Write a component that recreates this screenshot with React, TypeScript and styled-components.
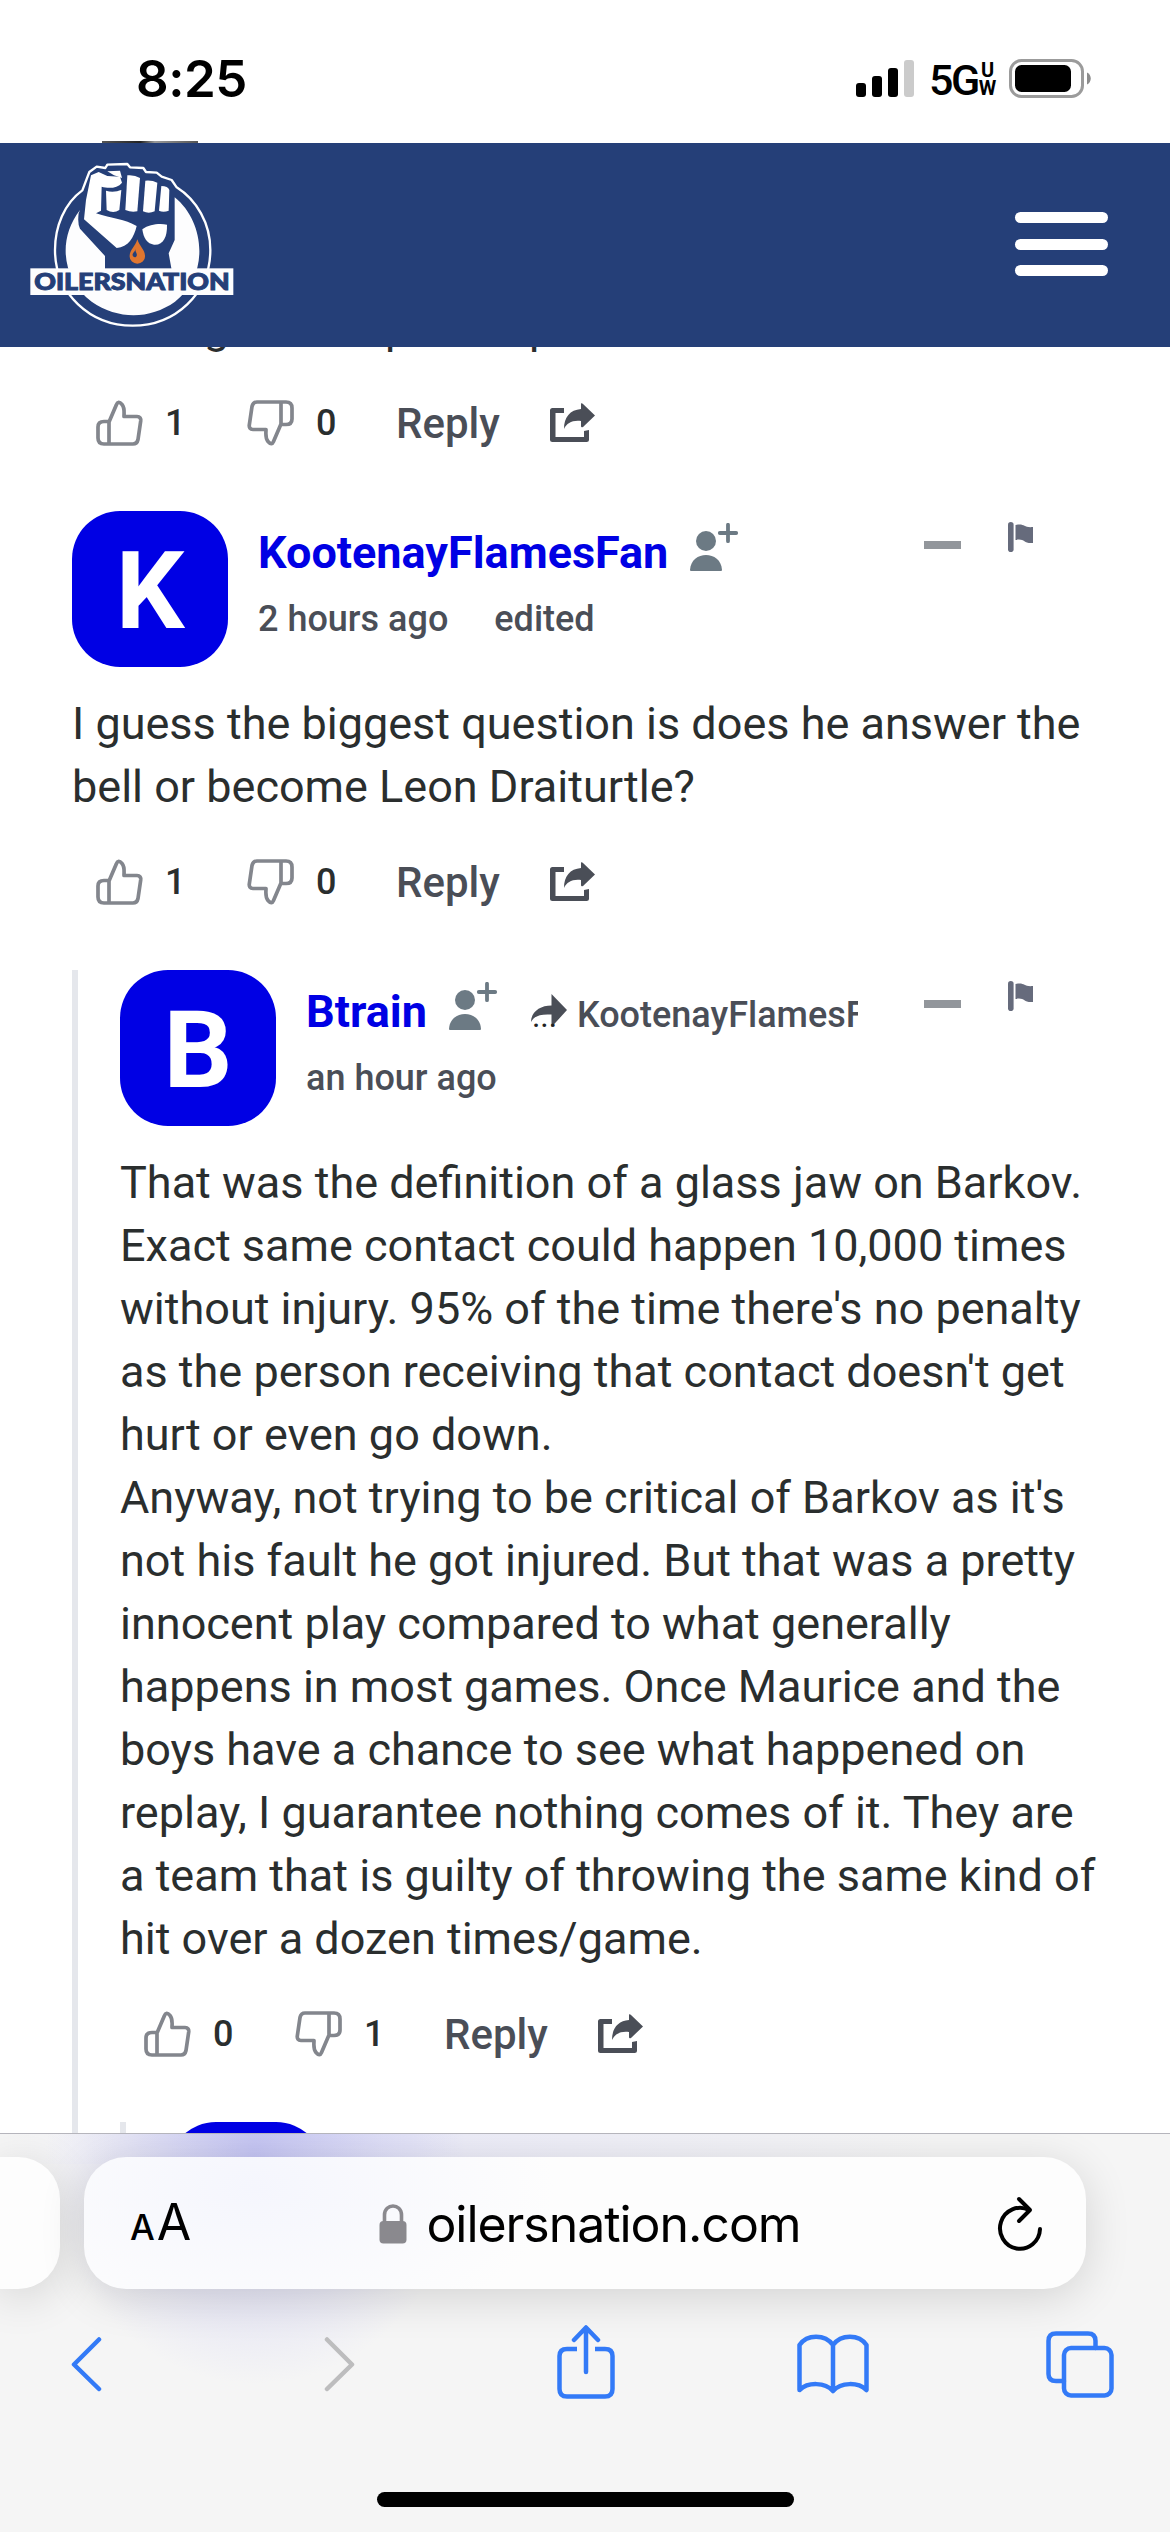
import styled, { createGlobalStyle } from "styled-components";

const App = () => (
  <Screen>
    <GlobalStyle />
    <StatusBar>
      <Clock>8:25</Clock>
      <StatusIcons>
        <SignalIcon />
        <Network>
          5G
          <NetworkSuffix>
            <span>U</span>
            <span>W</span>
          </NetworkSuffix>
        </Network>
        <BatteryIcon />
      </StatusIcons>
    </StatusBar>

    <SiteHeader>
      <Logo />
      <MenuButton aria-label="Menu">
        <span />
        <span />
        <span />
      </MenuButton>
    </SiteHeader>

    <Thread>
      <ClippedLine>
        <span>g</span>
        <span>p</span>
        <span>p</span>
      </ClippedLine>
      <Actions likes={1} dislikes={0} />
      <Comment
        author="KootenayFlamesFan"
        time="2 hours ago"
        edited
        lines={[
          "I guess the biggest question is does he answer the",
          "bell or become Leon Draiturtle?",
        ]}
        likes={1}
        dislikes={0}
      />
      <Replies>
        <Comment
          author="Btrain"
          time="an hour ago"
          replyTo="KootenayFlamesFan"
          lines={[
            "That was the definition of a glass jaw on Barkov.",
            "Exact same contact could happen 10,000 times",
            "without injury. 95% of the time there's no penalty",
            "as the person receiving that contact doesn't get",
            "hurt or even go down.",
            "Anyway, not trying to be critical of Barkov as it's",
            "not his fault he got injured. But that was a pretty",
            "innocent play compared to what generally",
            "happens in most games. Once Maurice and the",
            "boys have a chance to see what happened on",
            "replay, I guarantee nothing comes of it. They are",
            "a team that is guilty of throwing the same kind of",
            "hit over a dozen times/game.",
          ]}
          likes={0}
          dislikes={1}
        />
        <Replies>
          <Avatar />
        </Replies>
      </Replies>
    </Thread>

    <BrowserBar>
      <TabStrip>
        <PreviousTab />
        <AddressBar>
          <TextSize>
            <small>A</small>A
          </TextSize>
          <Address>
            <LockIcon />
            oilersnation.com
          </Address>
          <ReloadIcon />
        </AddressBar>
      </TabStrip>
      <Toolbar>
        <BackIcon />
        <ForwardIcon />
        <ShareSheetIcon />
        <BookIcon />
        <TabsIcon />
      </Toolbar>
      <HomeIndicator />
    </BrowserBar>
  </Screen>
);

export default App;

const Comment = ({
  author,
  time,
  edited,
  replyTo,
  lines,
  likes,
  dislikes,
}: CommentProps) => (
  <article>
    <CommentHeader>
      <Avatar>{author[0]}</Avatar>
      <Meta>
        <AuthorRow>
          <Author>{author}</Author>
          <FollowIcon />
          {replyTo && (
            <ReplyTo>
              <ReplyArrow>
                <ReplyArrowIcon />
                <Dots>...</Dots>
              </ReplyArrow>
              {replyTo}
            </ReplyTo>
          )}
        </AuthorRow>
        <TimeRow>
          <span>{time}</span>
          {edited && <span>edited</span>}
        </TimeRow>
      </Meta>
      <Controls>
        <CollapseButton aria-label="Collapse" />
        <FlagIcon />
      </Controls>
    </CommentHeader>
    <CommentText>
      {lines.map((line) => (
        <span key={line}>{line}</span>
      ))}
    </CommentText>
    <Actions likes={likes} dislikes={dislikes} />
  </article>
);

const Actions = ({ likes, dislikes }: ActionsProps) => (
  <ActionRow>
    <ThumbIcon />
    <Count>{likes}</Count>
    <ThumbIcon $down />
    <Count>{dislikes}</Count>
    <ReplyButton>Reply</ReplyButton>
    <ShareIcon />
  </ActionRow>
);

type ActionsProps = {
  likes: number;
  dislikes: number;
};

type CommentProps = ActionsProps & {
  author: string;
  time: string;
  edited?: boolean;
  replyTo?: string;
  lines: string[];
};

// icons
const SignalIcon = () => (
  <svg width="58" height="37" viewBox="0 0 58 37">
    <rect x="0" y="23" width="10" height="14" rx="3" />
    <rect x="16" y="16" width="10" height="21" rx="3" />
    <rect x="32" y="8" width="10" height="29" rx="3" />
    <rect x="48" y="0" width="10" height="37" rx="3" fill="#cbcbcb" />
  </svg>
);

const BatteryIcon = () => (
  <svg width="82" height="39" viewBox="0 0 82 39">
    <rect
      x="1.5"
      y="1.5"
      width="72"
      height="36"
      rx="11"
      fill="none"
      stroke="#9b9b9b"
      strokeWidth="3"
    />
    <rect x="6" y="6" width="56" height="27" rx="6.5" />
    <path d="M78 13.5c5 2 5 10 0 12z" fill="#8c8c8c" />
  </svg>
);

const Logo = () => (
  <svg width="230" height="190" viewBox="0 0 690 570">
    <path
      d="M187 121C133 160 105 230 105 300C105 430 210 527 338 527C466 527 571 430 571 300C571 220 530 150 470 112L455 90L425 80L410 68L378 66L370 54L330 52L322 42L262 44L256 54L230 50L208 66Z"
      fill="#253f78"
      stroke="#fff"
      strokeWidth="7"
      strokeLinejoin="round"
    />
    <path
      d="M180 180C110 270 128 390 215 455C295 510 390 508 465 455C570 375 555 215 464 142V270L446 310L455 360H255V318L180 236Q172 220 176 190Z"
      fill="#fdfdfe"
    />
    <path
      d="M213 76L236 66L262 78L300 80L306 98C292 116 264 116 245 110L243 182L228 190C275 205 315 208 350 228C342 262 325 292 290 294L192 208L198 150Z"
      fill="#fff"
    />
    <path d="M262 64L300 62L306 84L282 76Z" fill="#fff" />
    <path
      d="M258 122C276 128 292 124 304 120L298 180Q280 192 260 180Z"
      fill="#fff"
    />
    <path d="M322 76Q344 74 360 84L352 184Q334 188 316 180Z" fill="#fff" />
    <path d="M376 92Q396 90 412 98L404 184Q386 192 369 184Z" fill="#fff" />
    <path d="M424 108Q444 108 448 120L446 182Q430 188 417 182Z" fill="#fff" />
    <path
      d="M367 238C388 222 420 220 441 224C442 260 430 286 402 284C382 282 370 264 367 238Z"
      fill="#fff"
    />
    <path
      d="M352 268C360 292 376 300 375 320A23 21 0 0 1 329 320C328 300 346 290 352 268Z"
      fill="#e0762f"
    />
    <path
      d="M346 296C345 306 353 310 350 318C346 326 336 320 338 312C340 306 346 304 346 296Z"
      fill="#253f78"
    />
    <rect x="31" y="355" width="609" height="80" fill="#fdfdfe" />
    <text
      x="336"
      y="419"
      textAnchor="middle"
      textLength="586"
      lengthAdjust="spacingAndGlyphs"
      fontFamily="Lato, sans-serif"
      fontWeight="900"
      fontSize="67"
      fill="#253f78"
      stroke="#253f78"
      strokeWidth="3"
    >
      OILERSNATION
    </text>
  </svg>
);

const FollowIcon = () => (
  <svg width="49" height="49" viewBox="0 0 49 49" fill="#6c7a84">
    <circle cx="16" cy="18" r="10" />
    <path d="M0 47C1 27 31 27 32 47Q32 48 31 48H1Q0 48 0 47Z" />
    <path
      d="M38 1.8V18.2M29.8 10H46.2"
      stroke="#6c7a84"
      strokeWidth="3.8"
      strokeLinecap="round"
    />
  </svg>
);

const ReplyArrowIcon = () => (
  <svg width="36" height="34" viewBox="0 0 36 34" fill="#4a4e57">
    <path d="M20.5 0L36 16L20.5 33V20.5C10 20 4 21 0 28C0 18 9 11.5 20.5 11.5Z" />
  </svg>
);

const FlagIcon = () => (
  <svg width="26" height="30" viewBox="0 0 26 30" fill="#666b7c">
    <rect x="0" y="0" width="5.6" height="30" rx="2.8" />
    <path d="M7.5 3C17 1 15 6 25 5V21C15 22 17 16 7.5 18Z" />
  </svg>
);

const ThumbIcon = ({ $down = false }: { $down?: boolean }) => (
  <Thumb
    $down={$down}
    width="47"
    height="46"
    viewBox="0 0 47 46"
    fill="none"
    stroke="#83868d"
    strokeWidth="3.7"
    strokeLinejoin="round"
  >
    <path d="M13 22L20.5 4.5C21.5 2 23.5 1.5 26 4.5C29 8 28 12 28 16.5H41C44 16.5 45 18.5 44.7 21L42 39.5Q41 44 37 44H8Q2 44 2 38V27Q2 21.5 8 21.5H13V44" />
  </Thumb>
);

const ShareIcon = () => (
  <svg width="46" height="40" viewBox="0 0 46 40" fill="#4a4e57">
    <path d="M2.5 5H14V10H5.5V34H34V28L39 27V36.5Q39 39 36.5 39H2.5Q0 39 0 36.5V7.5Q0 5 2.5 5Z" />
    <path d="M31 0.5Q32 0 33 1L45 12.5L33 24Q31 25 31 23V18C22 17 17 20 14 26C14 14 20 7 31 6Z" />
  </svg>
);

const LockIcon = () => (
  <svg width="28" height="40" viewBox="0 0 28 40">
    <path
      d="M5.5 19V11C5.5-1 22.5-1 22.5 11V19"
      fill="none"
      stroke="#8a898e"
      strokeWidth="3.6"
    />
    <rect x="0.5" y="17" width="27" height="22.5" rx="4" fill="#8a898e" />
  </svg>
);

const ReloadIcon = () => (
  <svg
    width="46"
    height="56"
    viewBox="0 0 46 56"
    fill="none"
    stroke="#000"
    strokeWidth="4"
    strokeLinecap="round"
    strokeLinejoin="round"
  >
    <path d="M43 33A20 20.5 0 1 1 32 14" />
    <path d="M22 3L33 14L22 25" />
  </svg>
);

const BackIcon = () => (
  <ToolIcon width="35" height="56" viewBox="0 0 35 56">
    <path d="M31 3.5L6 28.5L31 53" />
  </ToolIcon>
);

const ForwardIcon = () => (
  <ToolIcon width="35" height="56" viewBox="0 0 35 56" $muted>
    <path d="M5 3.5L30 28.5L5 53" />
  </ToolIcon>
);

const ShareSheetIcon = () => (
  <ToolIcon width="58" height="78" viewBox="0 0 58 78">
    <path
      d="M20 24H10Q2.5 24 2.5 31V64Q2.5 71.5 10 71.5H48Q55.5 71.5 55.5 64V31Q55.5 24 48 24H38"
      strokeLinecap="butt"
    />
    <path d="M29 47V4M17 15L29 2.5L41 15" />
  </ToolIcon>
);

const BookIcon = () => (
  <ToolIcon width="72" height="60" viewBox="0 0 72 60">
    <path d="M36 11C28 0 10 0 2.5 11V56C11 48 28 48 36 57C44 48 61 48 69.5 56V11C62 0 44 0 36 11V57" />
  </ToolIcon>
);

const TabsIcon = () => (
  <ToolIcon width="68" height="67" viewBox="0 0 68 67">
    <rect x="18" y="17" width="47.5" height="47.5" rx="7" />
    <path d="M18 50H10Q2.5 50 2.5 43V10Q2.5 2.5 10 2.5H42Q49.5 2.5 49.5 10V17" />
  </ToolIcon>
);

const GlobalStyle = createGlobalStyle`
  * {
    box-sizing: border-box;
  }

  body {
    margin: 0;
    background: #fff;
  }

  svg {
    display: block;
    flex-shrink: 0;
  }
`;

const Screen = styled.div`
  display: flex;
  flex-direction: column;
  width: 1170px;
  height: 2532px;
  overflow: hidden;
  background: #fff;
  font-family: Roboto, sans-serif;
`;

const StatusBar = styled.div`
  display: flex;
  flex-shrink: 0;
  align-items: center;
  justify-content: space-between;
  height: 143px;
  padding: 13px 79px 0 136px;
  /* sliver of the avatar scrolled under the header */
  background: linear-gradient(90deg, #555, #222 40%, #999 55%, #555) 102px
    100% / 96px 2px no-repeat;
`;

const Clock = styled.span`
  font-family: Inter, sans-serif;
  font-size: 51px;
  font-weight: 600;
  letter-spacing: -0.5px;
`;

const StatusIcons = styled.div`
  display: flex;
  align-items: center;
  gap: 15px;
`;

const Network = styled.div`
  display: flex;
  align-items: center;
  width: 65px;
  height: 40px;
  padding-top: 3px;
  font-size: 43px;
  font-weight: 500;
  letter-spacing: -2.5px;
`;

const NetworkSuffix = styled.span`
  display: flex;
  flex-direction: column;
  align-items: center;
  margin: 0 0 2px 1px;
  font-size: 20px;
  font-weight: 700;
  line-height: 18px;
  letter-spacing: 0;
`;

const SiteHeader = styled.header`
  display: flex;
  flex-shrink: 0;
  align-items: center;
  justify-content: space-between;
  height: 204px;
  padding: 0 62px 0 20px;
  background: #253f78;
`;

const MenuButton = styled.button`
  display: flex;
  flex-direction: column;
  gap: 15.5px;
  width: 93px;
  margin-bottom: 2px;
  padding: 0;
  border: none;
  background: none;

  span {
    height: 11px;
    border-radius: 6px;
    background: #fff;
  }
`;

const Thread = styled.main`
  height: 1786px;
  padding: 0 72px;
  overflow: hidden;
`;

/* only the descenders show below the site header */
const ClippedLine = styled.div`
  display: flex;
  align-items: flex-end;
  height: 12px;
  padding-left: 132px;
  overflow: hidden;
  color: #2a2e2e;
  font-size: 45px;
  line-height: 63px;

  span {
    width: 181px;
  }

  span + span {
    width: 144px;
  }
`;

const Replies = styled.div`
  padding-left: 42px;
  border-left: 6px solid #e5e7ec;
`;

const CommentHeader = styled.header`
  display: flex;
  height: 156px;
`;

const Avatar = styled.div`
  display: flex;
  flex-shrink: 0;
  align-items: center;
  justify-content: center;
  width: 156px;
  height: 156px;
  padding-top: 3px;
  border-radius: 48px;
  background: #0000e4;
  color: #fff;
  font-size: 108px;
  font-weight: 700;
`;

const Meta = styled.div`
  display: flex;
  flex: 1;
  flex-direction: column;
  min-width: 0;
  padding: 12px 0 0 30px;
`;

const AuthorRow = styled.div`
  display: flex;
  height: 60px;
`;

const Author = styled.span`
  margin-right: 22px;
  color: #0000e4;
  font-size: 45px;
  font-weight: 700;
  line-height: 60px;
`;

const ReplyTo = styled.span`
  display: flex;
  width: 327px;
  margin-left: 33px;
  overflow: hidden;
  color: #4a4e57;
  font-size: 36px;
  font-weight: 500;
  line-height: 66px;
`;

const ReplyArrow = styled.span`
  position: relative;
  flex-shrink: 0;
  width: 46px;
  padding-top: 12px;
`;

const Dots = styled.span`
  position: absolute;
  top: 12px;
  left: 1px;
  color: #222;
  font-size: 32px;
  font-weight: 400;
  line-height: 44px;
`;

const TimeRow = styled.div`
  display: flex;
  gap: 46px;
  color: #4a4e57;
  font-size: 36px;
  font-weight: 500;
  line-height: 72px;
`;

const Controls = styled.div`
  display: flex;
  align-items: flex-start;
  gap: 47px;
  padding: 11px 64px 0 0;
`;

const CollapseButton = styled.button`
  width: 37px;
  height: 8px;
  margin-top: 19px;
  padding: 0;
  border: none;
  background: #92969b;
`;

const CommentText = styled.p`
  display: flex;
  flex-direction: column;
  margin: 25px 0 0;
  color: #2a2e2e;
  font-size: 45px;
  line-height: 63px;
  white-space: nowrap;
`;

const ActionRow = styled.div`
  display: flex;
  align-items: center;
  height: 128px;
  margin-bottom: 24px;
  padding-left: 24px;
`;

const Thumb = styled.svg<{ $down: boolean }>`
  transform: ${({ $down }) => ($down ? "rotate(180deg)" : "none")};
`;

const Count = styled.span`
  width: 82px;
  margin-left: 22px;
  color: #2a2e2e;
  font-size: 36px;
  font-weight: 500;
`;

const ReplyButton = styled.button`
  width: 154px;
  margin-left: -2px;
  padding: 0;
  border: none;
  background: none;
  color: #4a4e57;
  font: 500 42px Roboto, sans-serif;
  text-align: left;
`;

const BrowserBar = styled.footer`
  display: flex;
  flex: 1;
  flex-direction: column;
  border-top: 1px solid #b5b5bc;
  overflow: hidden;
  background: radial-gradient(
      ellipse 210px 230px at 255px 20px,
      rgba(120, 120, 235, 0.36),
      rgba(150, 150, 240, 0.16) 60%,
      transparent
    ),
    linear-gradient(90deg, transparent, #ebebf8 35%, transparent 80%) 0 0 /
      100% 30px no-repeat,
    #f5f5f5;
`;

const TabStrip = styled.div`
  display: flex;
  gap: 24px;
  padding-top: 23px;
`;

const PreviousTab = styled.div`
  width: 60px;
  height: 132px;
  border-radius: 0 42px 42px 0;
  background: #fdfdfd;
  box-shadow: 0 8px 46px rgba(0, 0, 0, 0.14);
`;

const AddressBar = styled.div`
  display: flex;
  align-items: center;
  justify-content: space-between;
  width: 1002px;
  height: 132px;
  padding: 2px 43px 0 46px;
  border-radius: 42px;
  background: radial-gradient(
      ellipse 300px 160px at 170px 30px,
      #f5f6fd,
      transparent
    ),
    #fdfdfd;
  box-shadow: 0 8px 46px rgba(0, 0, 0, 0.14);
  font-family: Inter, sans-serif;
`;

const TextSize = styled.span`
  width: 53px;
  font-size: 50px;
  line-height: 60px;
  letter-spacing: -1px;
  white-space: nowrap;

  small {
    margin-right: 3px;
    font-size: 35px;
    font-weight: 500;
  }
`;

const Address = styled.span`
  display: flex;
  align-items: center;
  gap: 19px;
  font-size: 50px;
  letter-spacing: -1.05px;
`;

const Toolbar = styled.nav`
  display: grid;
  grid-template-columns: 254px 235px 240px 249px auto;
  align-items: center;
  height: 150px;
  padding-left: 68px;
`;

const ToolIcon = styled.svg<{ $muted?: boolean }>`
  fill: none;
  stroke: ${({ $muted }) => ($muted ? "#bdbdbe" : "#337af7")};
  stroke-width: 4.5px;
  stroke-linecap: round;
  stroke-linejoin: round;
`;

const HomeIndicator = styled.div`
  width: 417px;
  height: 15px;
  margin: 53px auto 0;
  border-radius: 8px;
  background: #000;
`;
